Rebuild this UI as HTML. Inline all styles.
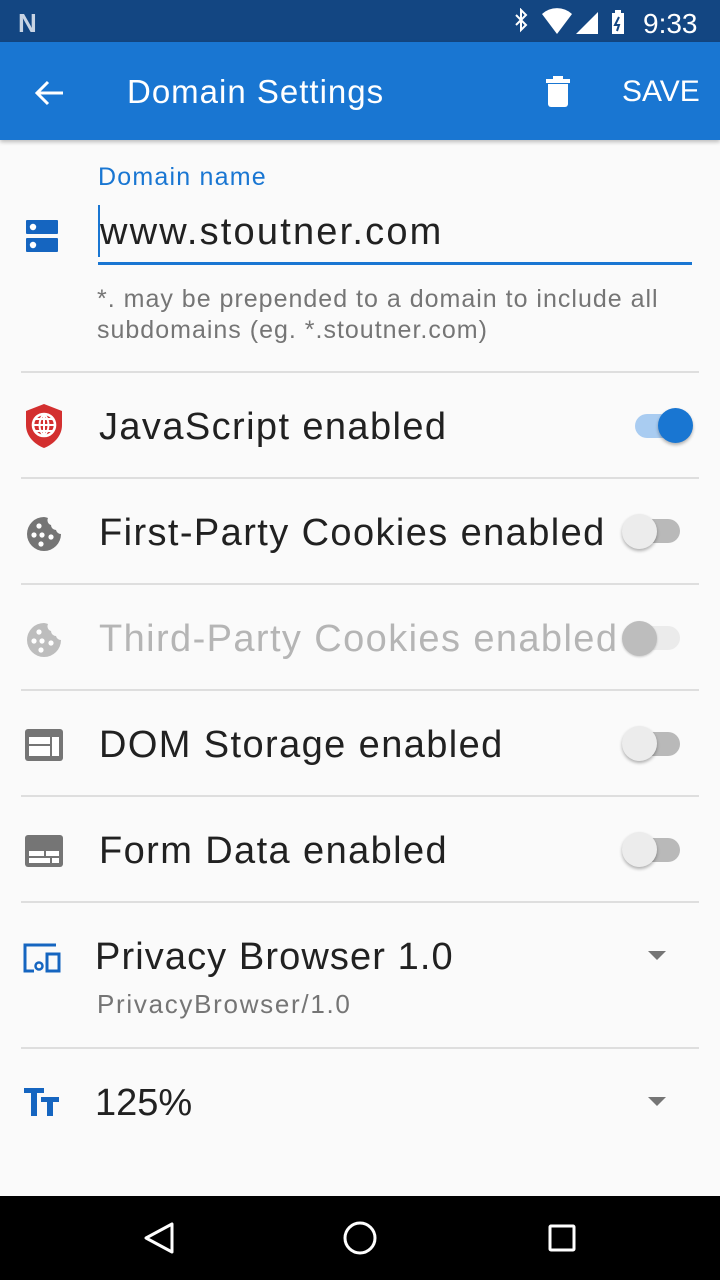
<!DOCTYPE html>
<html><head><meta charset="utf-8"><style>
*{margin:0;padding:0;box-sizing:border-box}
body{width:720px;height:1280px;background:#fafafa;font-family:"Liberation Sans",sans-serif;position:relative;overflow:hidden}
.a{position:absolute}
.sep{position:absolute;left:21px;width:678px;height:2px;background:#dedede}
.lbl{position:absolute;left:99px;font-size:38px;color:#212121;white-space:nowrap;letter-spacing:1.4px}
.trk{position:absolute;width:46px;height:24px;border-radius:12px}
.th{position:absolute;width:35px;height:35px;border-radius:50%;box-shadow:0 2px 3px rgba(0,0,0,.3)}
</style></head><body>
<div class="a" style="left:0;top:0;width:720px;height:42px;background:#134682"></div>
<div class="a" style="left:18px;top:8px;font-size:26px;font-weight:bold;color:#c8d4e4">N</div>
<svg class="a" style="left:510px;top:8px" width="200" height="28" viewBox="0 0 200 28">
<path d="M6 7l10 10-5 5V2l5 5-10 10" stroke="#fff" stroke-width="2" fill="none"/>
<path d="M32 6a22 22 0 0 1 30 0L47 26z" fill="#fff"/>
<path d="M88 4v22H66z" fill="#fff"/>
<rect x="102" y="5" width="12" height="21" fill="#fff"/><rect x="105" y="2" width="6" height="4" fill="#fff"/>
<path d="M109 9l-4 8h4l-2 6" stroke="#134682" stroke-width="2" fill="none"/>
<text x="133" y="25" font-size="28" fill="#fff" font-family="Liberation Sans">9:33</text>
</svg>
<div class="a" style="left:0;top:42px;width:720px;height:98px;background:#1976d2;box-shadow:0 2px 4px rgba(0,0,0,.25)"></div>
<svg class="a" style="left:33px;top:77px" width="32" height="32" viewBox="0 0 32 32"><path d="M30 16H4M15 5L4 16l11 11" stroke="#fff" stroke-width="3" fill="none"/></svg>
<div class="a" style="left:127px;top:73px;font-size:33px;color:#fff;letter-spacing:1px">Domain Settings</div>
<svg class="a" style="left:545px;top:75px" width="26" height="32" viewBox="0 0 26 32"><rect x="1" y="4" width="24" height="4" fill="#fff"/><rect x="8" y="1" width="10" height="4" fill="#fff"/><path d="M3 9h20v20a3 3 0 0 1-3 3H6a3 3 0 0 1-3-3z" fill="#fff"/></svg>
<div class="a" style="left:622px;top:75px;font-size:30px;color:#fff">SAVE</div>

<svg class="a" style="left:26px;top:220px" width="32" height="32" viewBox="0 0 32 32"><rect x="0" y="0" width="32" height="14" rx="1" fill="#1565c0"/><rect x="0" y="18" width="32" height="14" rx="1" fill="#1565c0"/><circle cx="7" cy="7" r="3.2" fill="#fff"/><circle cx="7" cy="25" r="3.2" fill="#fff"/></svg>
<div class="a" style="left:98px;top:163px;font-size:25px;color:#1976d2;letter-spacing:1.2px">Domain name</div>
<div class="a" style="left:98px;top:205px;width:2px;height:52px;background:#1976d2"></div>
<div class="a" style="left:100px;top:211px;font-size:38px;color:#212121;letter-spacing:2.2px">www.stoutner.com</div>
<div class="a" style="left:98px;top:262px;width:594px;height:3px;background:#1976d2"></div>
<div class="a" style="left:97px;top:284px;font-size:25px;color:#757575;line-height:31px;letter-spacing:1px;white-space:nowrap">*. may be prepended to a domain to include all<br>subdomains (eg. *.stoutner.com)</div>

<div class="sep" style="top:371px"></div>
<svg class="a" style="left:24px;top:403px" width="40" height="46" viewBox="0 0 40 46"><path d="M20 1L38 8v14c0 11-8 19-18 23C10 41 2 33 2 22V8z" fill="#d32f2f"/><circle cx="20" cy="22" r="11" fill="none" stroke="#fff" stroke-width="2.6"/><path d="M9 22h22M20 11v22M11 16h18M11 28h18M20 11c-6 6-6 16 0 22M20 11c6 6 6 16 0 22" stroke="#fff" stroke-width="2" fill="none"/></svg>
<div class="lbl" style="top:406px">JavaScript enabled</div>
<div class="trk" style="left:635px;top:414px;background:#a9ccf1"></div>
<div class="th" style="left:658px;top:408px;background:#1976d2"></div>

<div class="sep" style="top:477px"></div>
<svg class="a" style="left:26px;top:516px" width="36" height="36" viewBox="0 0 36 36"><path d="M18 1a17 17 0 1 0 17 17 5 5 0 0 1-5-4 5 5 0 0 1-5-5 5 5 0 0 1-3-7 16 16 0 0 0-4-1z" fill="#757575"/><g fill="#fff"><circle cx="13" cy="10" r="2.6"/><circle cx="8" cy="19" r="2.6"/><circle cx="16" cy="19" r="2.6"/><circle cx="25" cy="21" r="2.6"/><circle cx="15" cy="28" r="2.6"/></g></svg>
<div class="lbl" style="top:512px">First-Party Cookies enabled</div>
<div class="trk" style="left:634px;top:519px;background:#b9b9b9"></div>
<div class="th" style="left:622px;top:514px;background:#ececec"></div>

<div class="sep" style="top:583px"></div>
<svg class="a" style="left:26px;top:622px" width="36" height="36" viewBox="0 0 36 36"><path d="M18 1a17 17 0 1 0 17 17 5 5 0 0 1-5-4 5 5 0 0 1-5-5 5 5 0 0 1-3-7 16 16 0 0 0-4-1z" fill="#bdbdbd"/><g fill="#fff"><circle cx="13" cy="10" r="2.6"/><circle cx="8" cy="19" r="2.6"/><circle cx="16" cy="19" r="2.6"/><circle cx="25" cy="21" r="2.6"/><circle cx="15" cy="28" r="2.6"/></g></svg>
<div class="lbl" style="top:618px;color:#b5b5b5">Third-Party Cookies enabled</div>
<div class="trk" style="left:634px;top:626px;background:#ebebeb"></div>
<div class="th" style="left:622px;top:621px;background:#bdbdbd;box-shadow:0 1px 2px rgba(0,0,0,.2)"></div>

<div class="sep" style="top:689px"></div>
<svg class="a" style="left:25px;top:729px" width="38" height="32" viewBox="0 0 38 32"><rect width="38" height="32" rx="3" fill="#757575"/><rect x="4" y="8" width="21" height="7" fill="#fff"/><rect x="4" y="17" width="21" height="10" fill="#fff"/><rect x="27" y="8" width="7" height="19" fill="#fff"/></svg>
<div class="lbl" style="top:724px">DOM Storage enabled</div>
<div class="trk" style="left:634px;top:732px;background:#b9b9b9"></div>
<div class="th" style="left:622px;top:726px;background:#ececec"></div>

<div class="sep" style="top:795px"></div>
<svg class="a" style="left:25px;top:835px" width="38" height="32" viewBox="0 0 38 32"><rect width="38" height="32" rx="3" fill="#757575"/><rect x="4" y="16" width="15" height="5" fill="#fff"/><rect x="21" y="16" width="13" height="5" fill="#fff"/><rect x="4" y="23" width="21" height="5" fill="#fff"/><rect x="27" y="23" width="7" height="5" fill="#fff"/></svg>
<div class="lbl" style="top:830px">Form Data enabled</div>
<div class="trk" style="left:634px;top:838px;background:#b9b9b9"></div>
<div class="th" style="left:622px;top:832px;background:#ececec"></div>

<div class="sep" style="top:901px"></div>
<svg class="a" style="left:22px;top:943px" width="40" height="30" viewBox="0 0 40 30"><path d="M34 2H3v26h9" stroke="#1565c0" stroke-width="3" fill="none"/><circle cx="17" cy="23" r="3.5" stroke="#1565c0" stroke-width="2.5" fill="none"/><rect x="25" y="11" width="12" height="17" stroke="#1565c0" stroke-width="3" fill="none"/></svg>
<div class="a" style="left:95px;top:936px;font-size:38px;color:#212121;letter-spacing:1.1px">Privacy Browser 1.0</div>
<div class="a" style="left:97px;top:989px;font-size:26px;color:#757575;letter-spacing:1.7px">PrivacyBrowser/1.0</div>
<svg class="a" style="left:648px;top:951px" width="18" height="10"><path d="M0 0h18L9 9z" fill="#757575"/></svg>

<div class="sep" style="top:1047px"></div>
<svg class="a" style="left:24px;top:1088px" width="36" height="28" viewBox="0 0 36 28"><path d="M0 0h20v5h-7v23H7V5H0z" fill="#1565c0"/><path d="M17 9h18v5h-6v14h-6V14h-6z" fill="#1565c0"/></svg>
<div class="a" style="left:95px;top:1082px;font-size:38px;color:#212121">125%</div>
<svg class="a" style="left:648px;top:1097px" width="18" height="10"><path d="M0 0h18L9 9z" fill="#757575"/></svg>

<div class="a" style="left:0;top:1196px;width:720px;height:84px;background:#000"></div>
<svg class="a" style="left:0;top:1196px" width="720" height="84"><path d="M172 28v28L146 42z" stroke="#fff" stroke-width="3" fill="none" stroke-linejoin="round"/><circle cx="360" cy="42" r="15" stroke="#fff" stroke-width="3" fill="none"/><rect x="550" y="30" width="24" height="24" stroke="#fff" stroke-width="3" fill="none" rx="1"/></svg>
</body></html>
